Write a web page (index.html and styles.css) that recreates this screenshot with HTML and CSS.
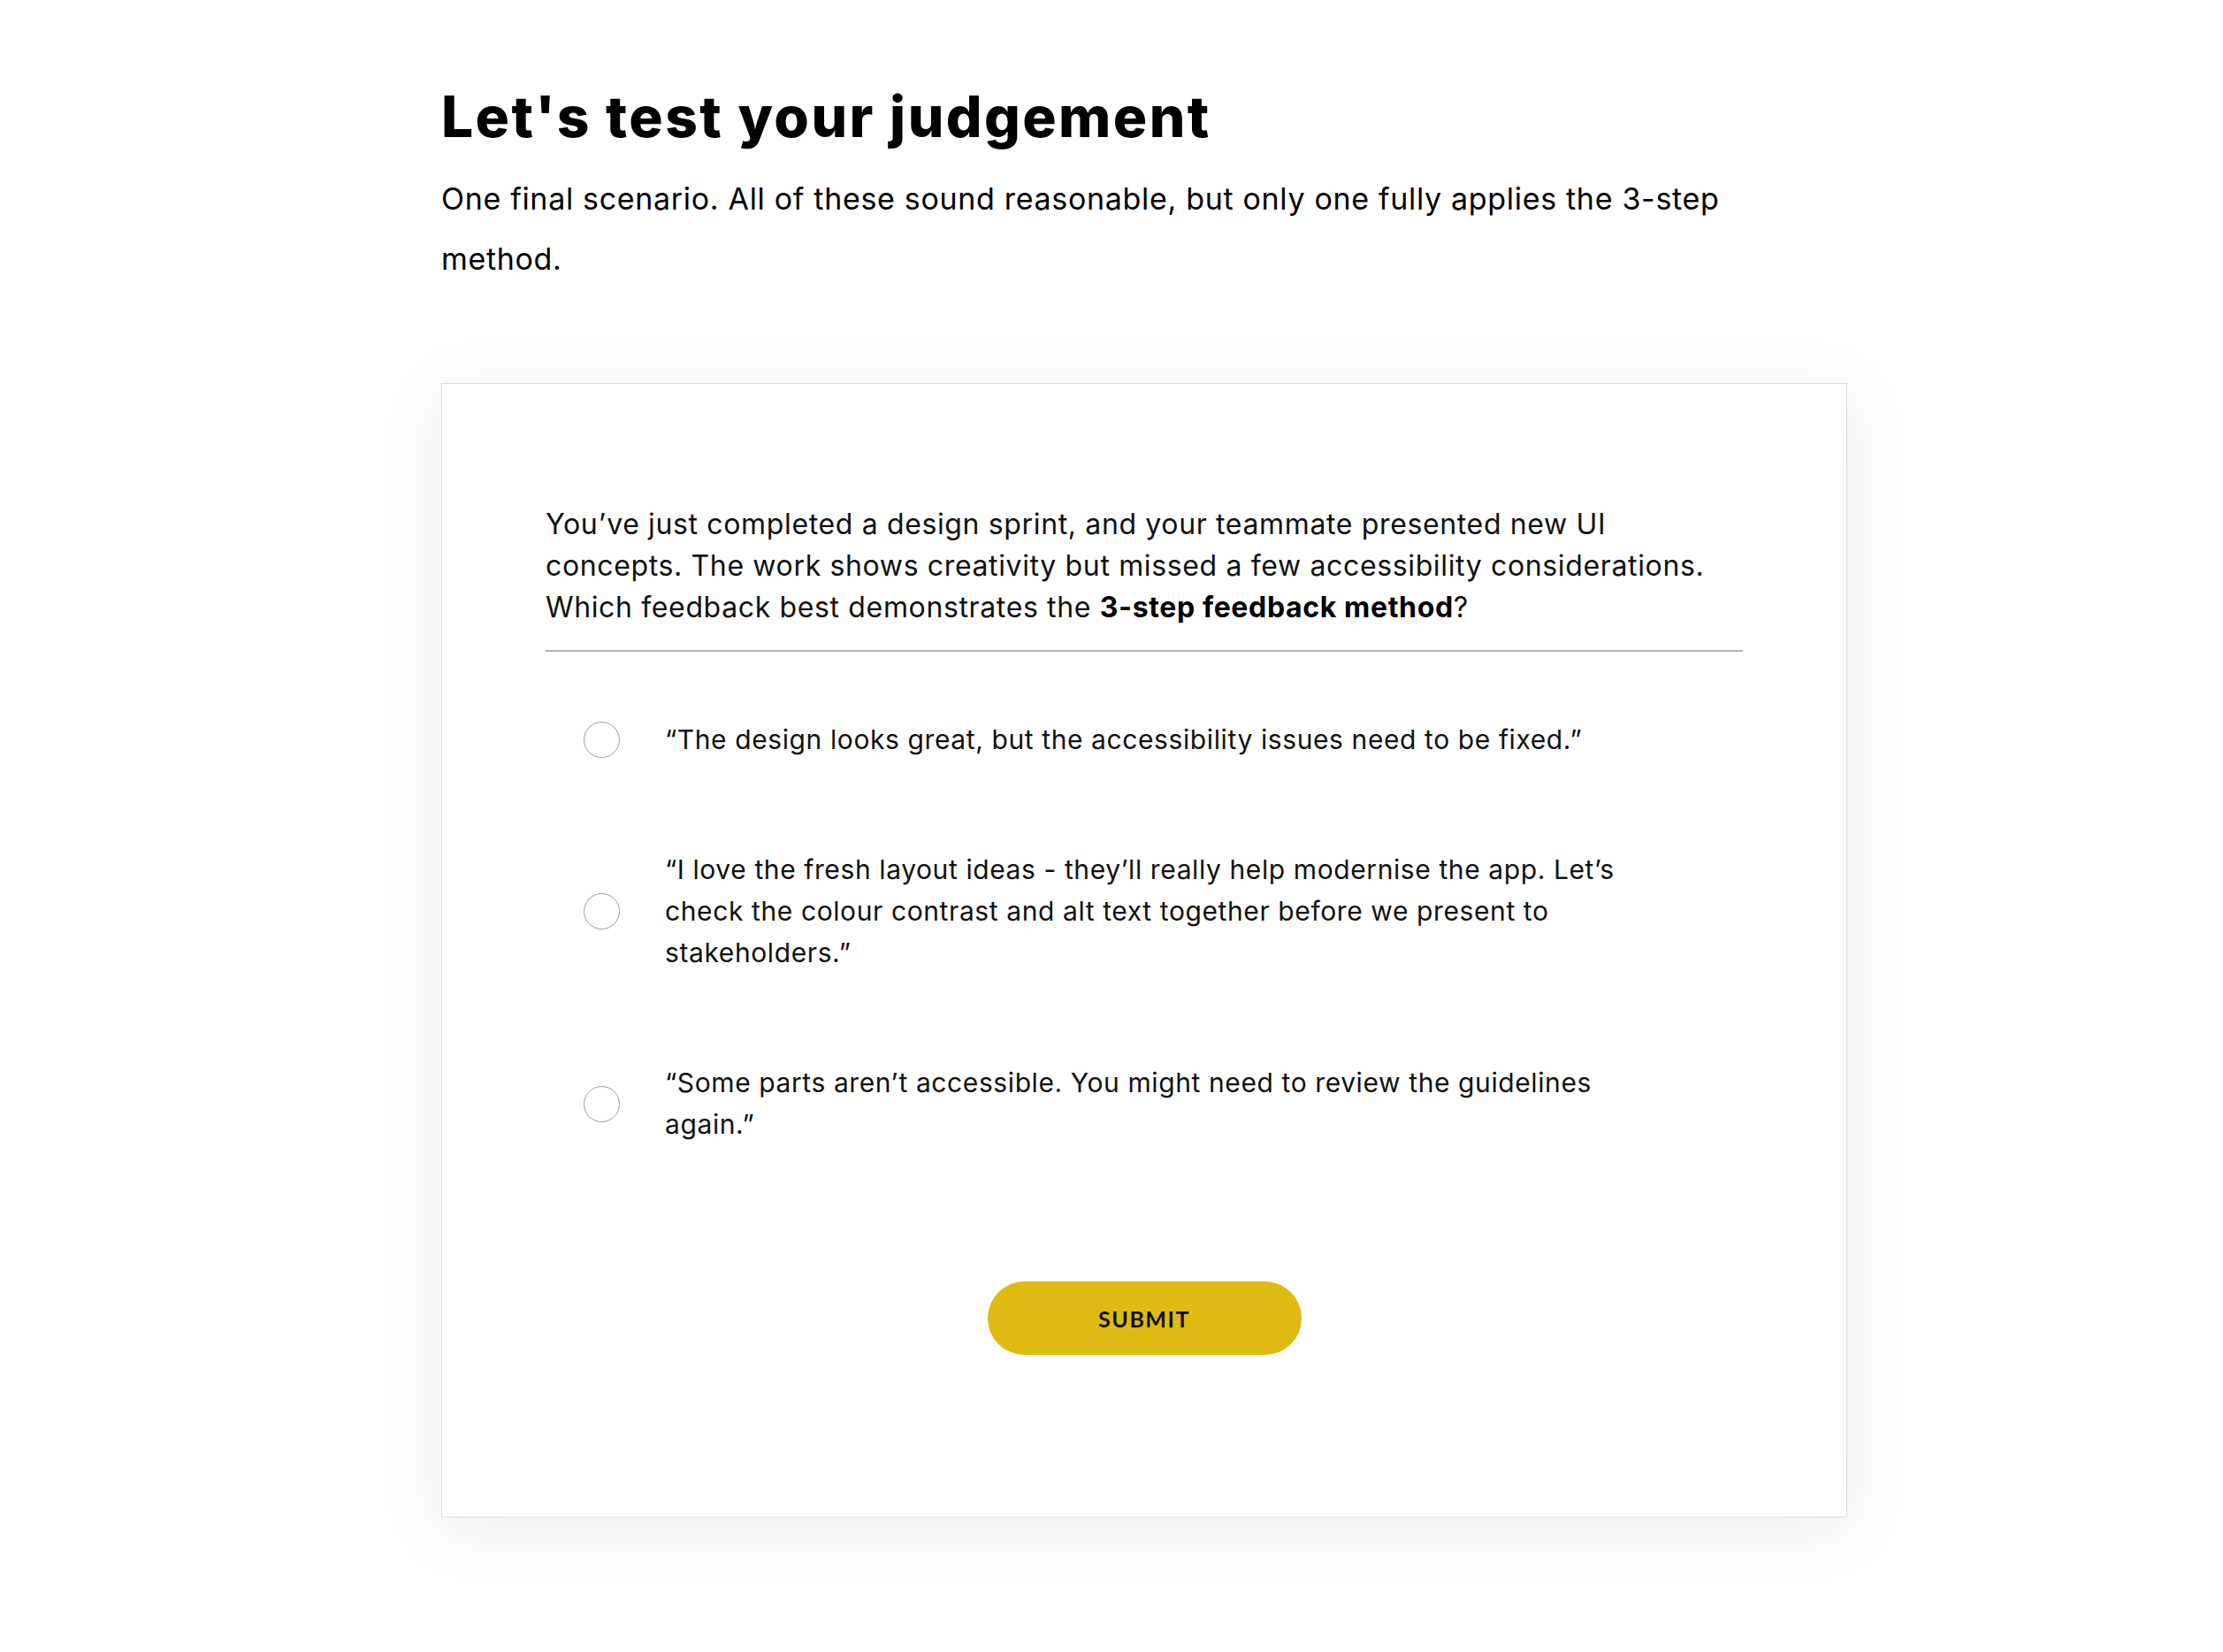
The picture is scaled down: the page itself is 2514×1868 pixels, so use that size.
FILE: index.html
```html
<!DOCTYPE html>
<html lang="en">
<head>
<meta charset="utf-8">
<title>Let's test your judgement</title>
<link rel="stylesheet" href="styles.css">
</head>
<body>
<main class="page">
  <h1 class="title">Let's test your judgement</h1>
  <p class="intro">One final scenario. All of these sound reasonable, but only one fully applies the 3-step method.</p>

  <section class="card">
    <p class="question">You’ve just completed a design sprint, and your teammate presented new UI concepts. The work shows creativity but missed a few accessibility considerations. Which feedback best demonstrates the <strong>3-step feedback method</strong>?</p>
    <div class="options">
      <label class="option">
        <span class="radio"></span>
        <span class="option-text">“The design looks great, but the accessibility issues need to be fixed.”</span>
      </label>
      <label class="option">
        <span class="radio"></span>
        <span class="option-text">“I love the fresh layout ideas - they’ll really help modernise the app. Let’s check the colour contrast and alt text together before we present to stakeholders.”</span>
      </label>
      <label class="option">
        <span class="radio"></span>
        <span class="option-text">“Some parts aren’t accessible. You might need to review the guidelines again.”</span>
      </label>
    </div>
    <div class="actions">
      <button class="submit" type="button">SUBMIT</button>
    </div>
  </section>
</main>
</body>
</html>
```

FILE: styles.css
```css
* {
  box-sizing: border-box;
}

html, body {
  margin: 0;
  padding: 0;
  background: #ffffff;
}

body {
  font-family: "Inter", "Noto Sans", sans-serif;
  color: #111111;
}

.page {
  padding: 92px 0 150px 499px;
  width: 2089px;
}

.title {
  margin: 0;
  font-family: "Inter", sans-serif;
  font-weight: 800;
  font-size: 64px;
  line-height: 80px;
  letter-spacing: 2.4px;
  color: #000000;
}

.intro {
  margin: 19px 0 0;
  font-size: 34px;
  line-height: 68px;
  letter-spacing: 0.02em;
  color: #000000;
  max-width: 1500px;
}

.card {
  margin-top: 106px;
  width: 1590px;
  background: #ffffff;
  border: 1px solid #dedede;
  box-shadow: 0 12px 70px rgba(0, 0, 0, 0.08);
  padding: 135px 117px 183px 117px;
}

.question {
  margin: 0;
  font-size: 32px;
  line-height: 47px;
  letter-spacing: 0.02em;
  color: #111111;
  padding-bottom: 25px;
  border-bottom: 2px solid #b3b3b3;
}

.question strong {
  font-weight: 700;
  color: #000000;
}

.options {
  margin-top: 26px;
  display: flex;
  flex-direction: column;
}

.option {
  display: flex;
  align-items: center;
  padding: 50px 110px 50px 43px;
  cursor: pointer;
}

.radio {
  flex: 0 0 auto;
  width: 41px;
  height: 41px;
  border-radius: 50%;
  border: 1.5px solid #9c9c9c;
  background: #ffffff;
  margin-right: 51px;
}

.option-text {
  font-size: 30px;
  line-height: 47px;
  letter-spacing: 0.02em;
  color: #111111;
}

.actions {
  margin-top: 104px;
  display: flex;
  justify-content: center;
}

.submit {
  width: 355px;
  height: 83px;
  border: none;
  border-radius: 42px;
  background: #dfba12;
  font-family: "Lato", sans-serif;
  font-weight: 700;
  font-size: 25px;
  letter-spacing: 1.5px;
  color: #111111;
  cursor: pointer;
}
```
